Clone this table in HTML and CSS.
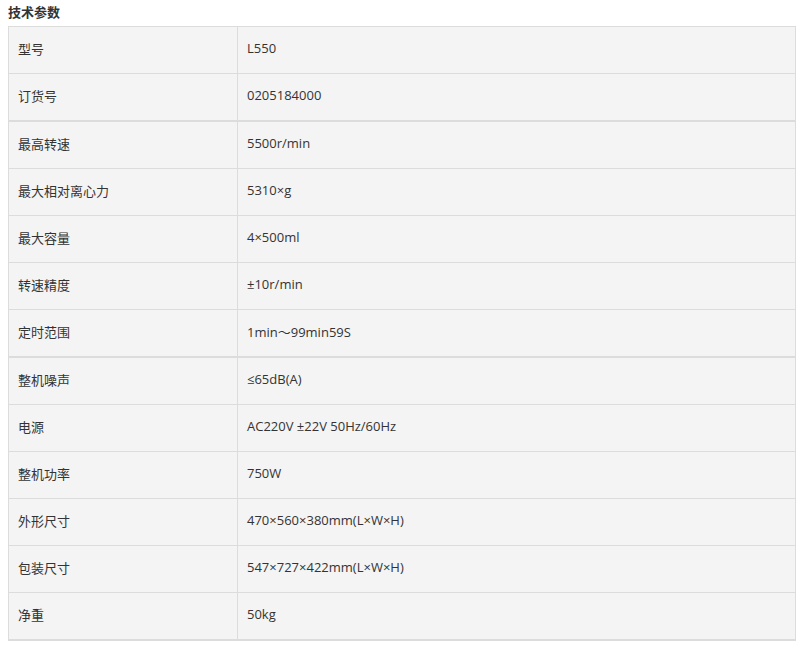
FILE: index.html
```html
<!DOCTYPE html>
<html lang="zh-CN">
<head>
<meta charset="utf-8">
<title>技术参数</title>
<link rel="stylesheet" href="styles.css">
</head>
<body>
<div class="title">技术参数</div>
<div class="spec">
  <div class="row"><div class="k">型号</div><div class="v">L550</div></div>
  <div class="row end"><div class="k">订货号</div><div class="v">0205184000</div></div>
  <div class="row"><div class="k">最高转速</div><div class="v">5500r/min</div></div>
  <div class="row"><div class="k">最大相对离心力</div><div class="v">5310×g</div></div>
  <div class="row"><div class="k">最大容量</div><div class="v">4×500ml</div></div>
  <div class="row"><div class="k">转速精度</div><div class="v">±10r/min</div></div>
  <div class="row end"><div class="k">定时范围</div><div class="v">1min～99min59S</div></div>
  <div class="row"><div class="k">整机噪声</div><div class="v">≤65dB(A)</div></div>
  <div class="row"><div class="k">电源</div><div class="v">AC220V ±22V 50Hz/60Hz</div></div>
  <div class="row"><div class="k">整机功率</div><div class="v">750W</div></div>
  <div class="row"><div class="k">外形尺寸</div><div class="v">470×560×380mm(L×W×H)</div></div>
  <div class="row"><div class="k">包装尺寸</div><div class="v">547×727×422mm(L×W×H)</div></div>
  <div class="row end"><div class="k">净重</div><div class="v">50kg</div></div>
</div>
</body>
</html>
```
FILE: styles.css
```css
html, body {
  margin: 0;
  padding: 0;
  background: #fff;
}
body {
  padding: 0 8px;
  font-family: "Open Sans", "Noto Sans CJK SC", sans-serif;
  font-size: 13px;
  color: #333;
}
.title {
  height: 26px;
  line-height: 23px;
  font-weight: bold;
  font-family: "Noto Sans CJK SC", sans-serif;
  color: #333;
}
.spec {
  width: 788px;
  box-sizing: border-box;
  border: 1px solid #dcdcdc;
  border-bottom: none;
  background: #f4f4f4;
}
.row {
  display: flex;
  height: 47px;
  box-sizing: border-box;
  border-bottom: 1px solid #dcdcdc;
  align-items: center;
}
.row.end {
  height: 48px;
  border-bottom-width: 2px;
}
.k {
  width: 229px;
  height: 100%;
  box-sizing: border-box;
  border-right: 1px solid #dcdcdc;
  padding-left: 9px;
  padding-bottom: 4px;
  display: flex;
  align-items: center;
}
.v {
  flex: 1;
  padding-left: 9px;
  padding-bottom: 4px;
}
```
